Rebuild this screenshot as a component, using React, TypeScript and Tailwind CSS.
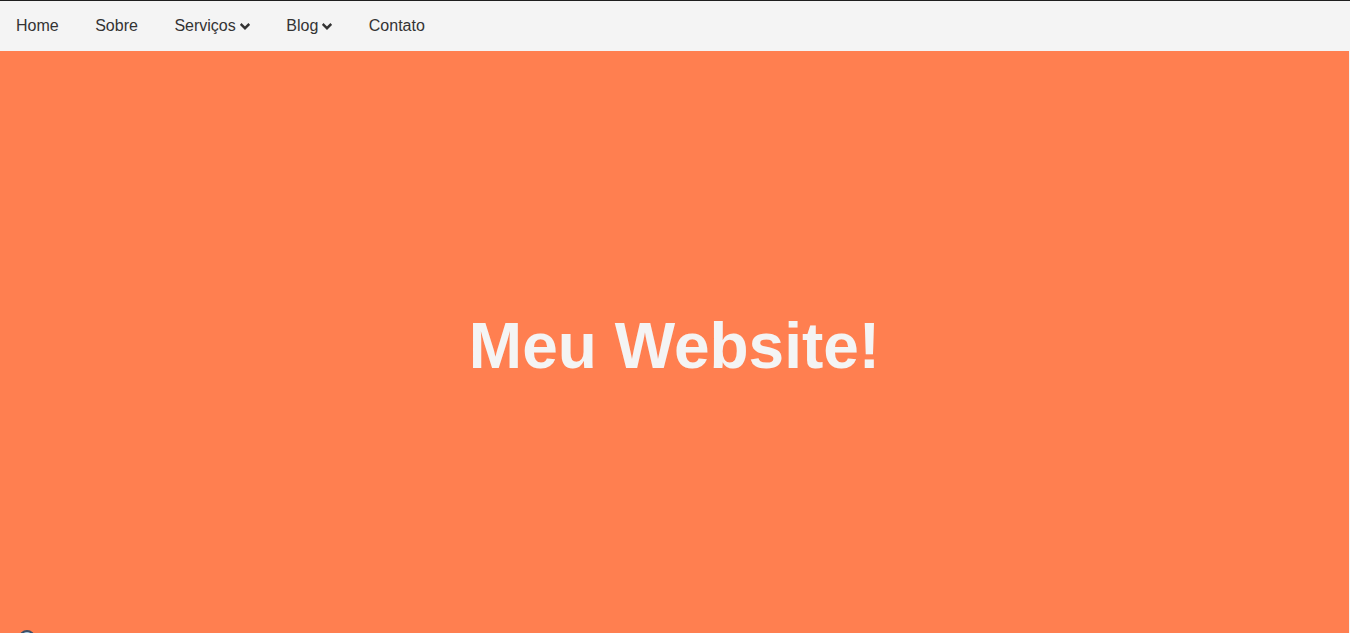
const Chevron = () => (
  <svg viewBox="0 0 10 8" className="w-[10px] h-[8px] mt-[1px]" fill="none" stroke="#333" strokeWidth="2.4" strokeLinecap="square">
    <path d="M1.6 1.8 L5 5.2 L8.4 1.8" />
  </svg>
);

const links = [
  { label: "Home", drop: false },
  { label: "Sobre", drop: false },
  { label: "Serviços", drop: true },
  { label: "Blog", drop: true },
  { label: "Contato", drop: false },
];

export default function App() {
  return (
    <div className="h-[633px] overflow-hidden bg-[#f4f4f4] font-['Liberation_Sans',Arial,sans-serif] border-t border-[#1f1f1f]">
      <nav className="h-[50px] bg-[#f4f4f4] flex items-center pl-4 gap-[36.5px] text-[16px] text-[#333]">
        {links.map((l) => (
          <a key={l.label} href="#" className="flex items-center gap-[4px] leading-none">
            {l.label}
            {l.drop && <Chevron />}
          </a>
        ))}
      </nav>
      <section className="mr-px h-[590px] bg-[#ff7f50] relative flex items-center justify-center">
        <h1 className="text-[64px] font-bold text-[#f4f4f4] leading-normal">Meu Website!</h1>
        <div className="absolute left-[19px] top-[579px] w-4 h-4 rounded-full border-2 border-[#3b5068] bg-[#a9c8e0]"></div>
      </section>
    </div>
  );
}
